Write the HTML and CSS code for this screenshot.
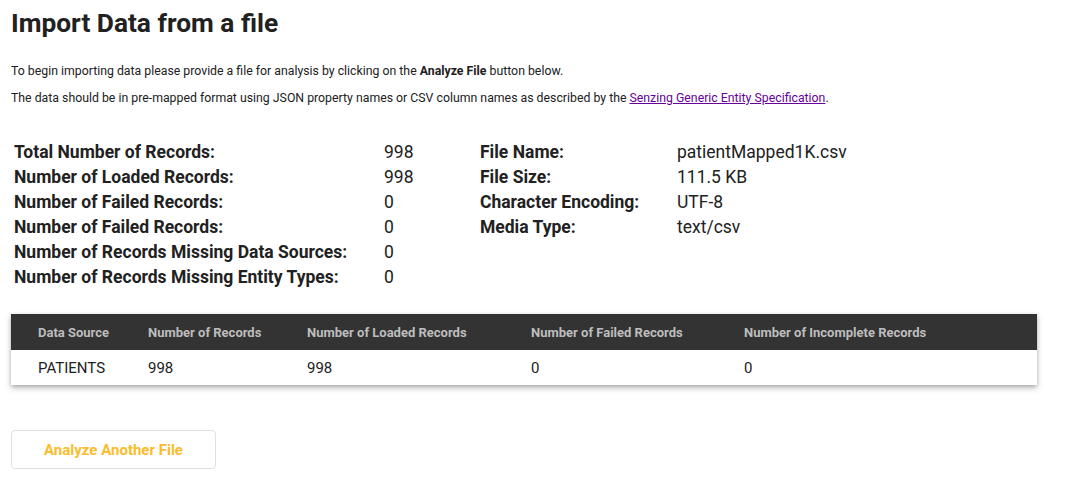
FILE: index.html
```html
<!DOCTYPE html>
<html>
<head>
<meta charset="utf-8">
<link rel="stylesheet" href="styles.css">
</head>
<body>
<div class="page">
  <h1 class="title">Import Data from a file</h1>
  <p class="intro">To begin importing data please provide a file for analysis by clicking on the <b>Analyze File</b> button below.</p>
  <p class="intro">The data should be in pre-mapped format using JSON property names or CSV column names as described by the <a class="link" href="#">Senzing Generic Entity Specification</a>.</p>

  <div class="summary">
    <div class="stats left">
      <div class="label">Total Number of Records:</div><div class="value">998</div>
      <div class="label">Number of Loaded Records:</div><div class="value">998</div>
      <div class="label">Number of Failed Records:</div><div class="value">0</div>
      <div class="label">Number of Failed Records:</div><div class="value">0</div>
      <div class="label">Number of Records Missing Data Sources:</div><div class="value">0</div>
      <div class="label">Number of Records Missing Entity Types:</div><div class="value">0</div>
    </div>
    <div class="stats right">
      <div class="label">File Name:</div><div class="value">patientMapped1K.csv</div>
      <div class="label">File Size:</div><div class="value">111.5 KB</div>
      <div class="label">Character Encoding:</div><div class="value">UTF-8</div>
      <div class="label">Media Type:</div><div class="value">text/csv</div>
    </div>
  </div>

  <table class="sources">
    <thead>
      <tr>
        <th class="c1">Data Source</th>
        <th class="c2">Number of Records</th>
        <th class="c3">Number of Loaded Records</th>
        <th class="c4">Number of Failed Records</th>
        <th class="c5">Number of Incomplete Records</th>
      </tr>
    </thead>
    <tbody>
      <tr>
        <td class="c1">PATIENTS</td>
        <td class="c2">998</td>
        <td class="c3">998</td>
        <td class="c4">0</td>
        <td class="c5">0</td>
      </tr>
    </tbody>
  </table>

  <button class="again">Analyze Another File</button>
</div>
</body>
</html>
```
FILE: styles.css
```css
html, body {
  margin: 0;
  padding: 0;
  background: #ffffff;
}
body {
  font-family: Roboto, "Liberation Sans", Arial, sans-serif;
  color: #212121;
}
.page {
  padding: 7px 28px 0 11px;
}
.title {
  font-size: 26.3px;
  line-height: 32px;
  font-weight: 700;
  margin: 0 0 24px 0;
  color: #212121;
}
.intro {
  font-size: 12.3px;
  line-height: 16px;
  margin: 0 0 11px 0;
  color: #212121;
}
.intro b {
  font-weight: 700;
}
.link {
  color: #660099;
  text-decoration: underline;
}
.summary {
  display: flex;
  margin: 34px 0 0 3px;
}
.stats {
  display: grid;
  row-gap: 0;
  font-size: 17.5px;
  line-height: 25px;
  align-content: start;
}
.left {
  grid-template-columns: 370px 96px;
}
.right {
  grid-template-columns: 197px auto;
}
.label {
  font-weight: 700;
  color: #212121;
}
.value {
  color: #212121;
}
.sources {
  width: 1026px;
  margin-top: 24px;
  border-collapse: collapse;
  box-shadow: 0 3px 6px rgba(0,0,0,0.25), 0 1px 3px rgba(0,0,0,0.15);
  font-size: 15px;
}
.sources th {
  background: #333333;
  color: #bdbdbd;
  font-size: 13px;
  font-weight: 700;
  text-align: left;
  height: 36px;
  padding: 0;
}
.sources td {
  height: 35px;
  padding: 0;
  color: #212121;
  background: #ffffff;
}
.c1 { width: 110px; padding-left: 27px !important; }
.c2 { width: 159px; }
.c3 { width: 224px; }
.c4 { width: 213px; }
.c5 { width: auto; }
.again {
  display: block;
  margin-top: 45px;
  width: 205px;
  height: 39px;
  background: #ffffff;
  border: 1px solid #e0e0e0;
  border-radius: 4px;
  color: #fbbc2c;
  font-family: Roboto, "Liberation Sans", Arial, sans-serif;
  font-size: 15px;
  font-weight: 700;
  cursor: pointer;
}
```
